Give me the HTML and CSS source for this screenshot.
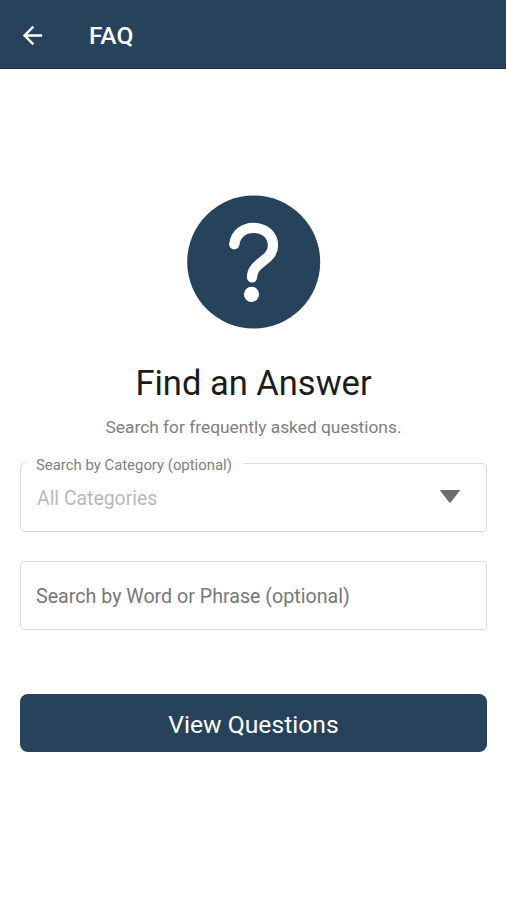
FILE: index.html
```html
<!DOCTYPE html>
<html lang="en">
<head>
<meta charset="utf-8">
<title>FAQ</title>
<link rel="stylesheet" href="styles.css">
</head>
<body>
<header class="bar">
  <svg class="back" viewBox="0 0 24 24"><path d="M20 11H7.83l5.59-5.59L12 4l-8 8 8 8 1.41-1.41L7.83 13H20v-2z"/></svg>
  <h1 class="bar-title">FAQ</h1>
</header>
<main class="content">
  <svg class="hero" viewBox="0 0 134 134">
    <circle cx="66.700" cy="67" r="66.500" fill="#27435b"/>
    <path d="M47.300 49.300C48.500 39 56.500 32.800 66.500 32.800C77.500 32.800 86 40 86 50.500C86 66 65 67 65 82.300" fill="none" stroke="#fff" stroke-width="10.300" stroke-linecap="round"/>
    <circle cx="64.500" cy="99.300" r="7.600" fill="#fff"/>
  </svg>
  <h2 class="title">Find an Answer</h2>
  <p class="subtitle">Search for frequently asked questions.</p>
  <fieldset class="field category">
    <legend class="legend">Search by Category (optional)</legend>
    <div class="select">
      <span>All Categories</span>
      <svg class="caret" viewBox="0 0 20 13"><path d="M.8 0h18.400q1 0 .4.900L10.800 12.200q-.8.900-1.600 0L.4.900Q-.2 0 .8 0z"/></svg>
    </div>
  </fieldset>
  <div class="field phrase">Search by Word or Phrase (optional)</div>
  <button class="submit">View Questions</button>
</main>
</body>
</html>
```
FILE: styles.css
```css
* { box-sizing: border-box; }
body { margin: 0; background: #fff; font-family: Roboto, sans-serif; }
h1, h2, p { margin: 0; font-weight: 400; }
.bar { height: 69px; background: #27435b; border-bottom: 1px solid #15294a; display: flex; align-items: center; padding: 2px 18px 0; }
.back { width: 29px; height: 29px; fill: #fff; }
.bar-title { margin-left: 42px; padding-top: 2px; color: #fff; font-size: 24.500px; font-weight: 500; line-height: 30px; }
.content { display: flex; flex-direction: column; align-items: stretch; padding: 126px 19px 0 20px; }
.hero { width: 134px; height: 134px; align-self: center; }
.title { margin-top: 33px; text-align: center; font-size: 34.500px; line-height: 42px; color: #1c1c1c; }
.subtitle { margin-top: 12px; text-align: center; font-size: 17.350px; line-height: 22px; color: #808080; }
.field { border: 1px solid #dcdcdc; border-radius: 4px; margin: 0; min-width: 0; }
.category { margin-top: 17px; height: 77px; padding: 0 26px 0 4px; }
.legend { position: relative; top: 2px; font-size: 14.900px; line-height: 16px; color: #808080; padding: 0 11px; }
.select { display: flex; align-items: center; justify-content: space-between; margin-top: 16px; padding-left: 12px; line-height: 24px; font-size: 19.400px; color: #b8b8b8; }
.caret { width: 20px; height: 13px; margin-bottom: 5px; fill: #6d6d6d; }
.phrase { margin-top: 29px; height: 69px; padding: 2px 15px 0; display: flex; align-items: center; font-size: 19.650px; color: #777; }
.submit { margin-top: 64px; height: 58px; padding: 2px 0 0; border: 0; border-radius: 8px; background: #27435b; color: #fff; font-family: inherit; font-size: 24.700px; }
```
